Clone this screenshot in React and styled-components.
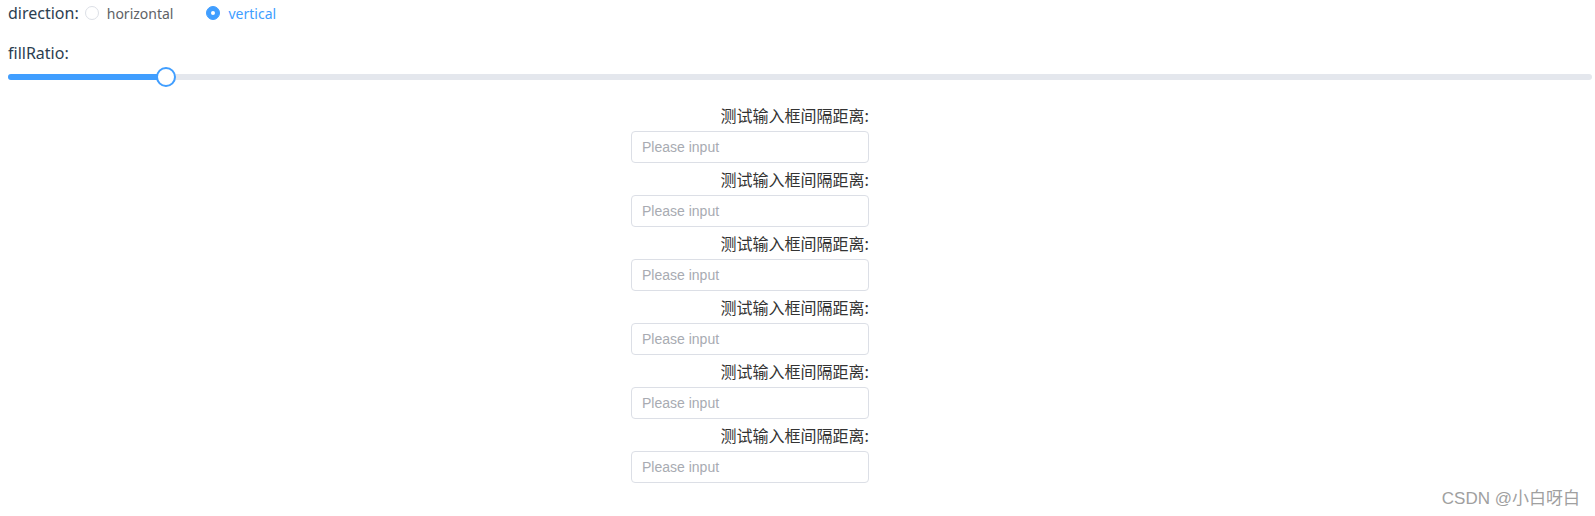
import React, { useState } from "react";
import styled, { createGlobalStyle } from "styled-components";

const GlobalStyle = createGlobalStyle`
  html, body {
    margin: 0;
    padding: 0;
    background: #fff;
  }
  body {
    font-family: "Noto Sans", "Noto Sans CJK SC", sans-serif;
  }
`;

const Page = styled.div`
  position: relative;
  height: 516px;
  padding: 0 3px 0 8px;
  box-sizing: border-box;
  color: #2c3e50;
`;

const OptionRow = styled.div`
  display: flex;
  align-items: center;
  height: 26px;
`;

const Caption = styled.span`
  font-size: 16px;
  line-height: 24px;
  color: #2c3e50;
`;

const RadioGroup = styled.div`
  display: flex;
  align-items: center;
  margin-left: 6px;
`;

const Radio = styled.label`
  display: flex;
  align-items: center;
  margin-right: 33px;
  cursor: pointer;
  font-size: 14px;
  color: ${(p) => (p.checked ? "#409eff" : "#606266")};
`;

const Circle = styled.span`
  width: 14px;
  height: 14px;
  box-sizing: border-box;
  border-radius: 50%;
  border: 1px solid ${(p) => (p.checked ? "#409eff" : "#dcdfe6")};
  background: ${(p) => (p.checked ? "#409eff" : "#fff")};
  display: flex;
  align-items: center;
  justify-content: center;
  margin-right: 8px;

  &::after {
    content: "";
    width: 4px;
    height: 4px;
    border-radius: 50%;
    background: #fff;
    display: ${(p) => (p.checked ? "block" : "none")};
  }
`;

const RatioLabel = styled.div`
  margin-top: 15px;
  font-size: 16px;
  line-height: 24px;
`;

const Slider = styled.div`
  height: 23px;
  display: flex;
  align-items: center;
`;

const Runway = styled.div`
  position: relative;
  flex: 1;
  height: 6px;
  border-radius: 3px;
  background: #e4e7ed;
`;

const Bar = styled.div`
  height: 100%;
  border-radius: 3px 0 0 3px;
  background: #409eff;
`;

const Thumb = styled.div`
  position: absolute;
  top: 50%;
  width: 20px;
  height: 20px;
  box-sizing: border-box;
  border: 2px solid #409eff;
  border-radius: 50%;
  background: #fff;
  transform: translate(-50%, -50%);
`;

const Form = styled.form`
  width: 238px;
  margin: 11px 0 0 623px;
  display: flex;
  flex-direction: column;
`;

const FieldLabel = styled.label`
  display: block;
  text-align: right;
  font-family: "Noto Sans CJK SC", "Noto Sans", sans-serif;
  font-size: 16px;
  line-height: 32px;
  height: 32px;
  color: #333;
`;

const Input = styled.input`
  display: block;
  width: 100%;
  height: 32px;
  box-sizing: border-box;
  padding: 1px 10px;
  border: 1px solid #dcdfe6;
  border-radius: 4px;
  font-family: "Liberation Sans", Arial, sans-serif;
  font-size: 14px;
  color: #606266;
  outline: none;

  &::placeholder {
    color: #a8abb2;
  }
`;

const Watermark = styled.div`
  position: absolute;
  right: 15px;
  bottom: 7px;
  font-family: "Liberation Sans", "Noto Sans CJK SC", sans-serif;
  font-size: 17px;
  color: #a0a0a0;
`;

export default function App() {
  const [direction, setDirection] = useState("vertical");
  const ratio = 10;

  return (
    <Page>
      <GlobalStyle />
      <OptionRow>
        <Caption>direction:</Caption>
        <RadioGroup>
          {["horizontal", "vertical"].map((d) => (
            <Radio key={d} checked={direction === d} onClick={() => setDirection(d)}>
              <Circle checked={direction === d} />
              {d}
            </Radio>
          ))}
        </RadioGroup>
      </OptionRow>
      <RatioLabel>fillRatio:</RatioLabel>
      <Slider>
        <Runway>
          <Bar style={{ width: `${ratio}%` }} />
          <Thumb style={{ left: `${ratio}%` }} />
        </Runway>
      </Slider>
      <Form>
        {[0, 1, 2, 3, 4, 5].map((i) => (
          <div key={i}>
            <FieldLabel>测试输入框间隔距离:</FieldLabel>
            <Input placeholder="Please input" />
          </div>
        ))}
      </Form>
      <Watermark>CSDN @小白呀白</Watermark>
    </Page>
  );
}
